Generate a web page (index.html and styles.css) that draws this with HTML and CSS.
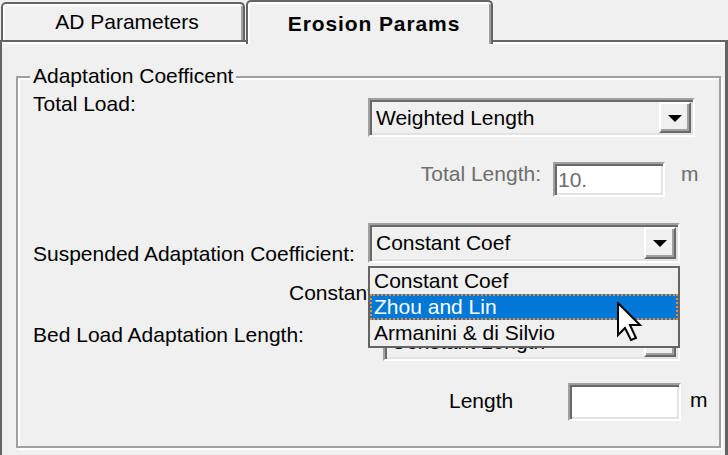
FILE: index.html
```html
<!DOCTYPE html>
<html>
<head>
<meta charset="utf-8">
<link rel="stylesheet" href="styles.css">
</head>
<body>
<div class="tabs">
  <div class="tab">AD Parameters</div>
  <div class="tab sel">Erosion Params</div>
</div>
<div class="page">
  <div class="group">
    <div class="legend">Adaptation Coefficent</div>
    <div class="row r1">
      <span class="lbl-a lbl-r1">Total Load:</span>
      <div class="combo cb1"><span class="val">Weighted Length</span><span class="btn"><i class="arrow"></i></span></div>
    </div>
    <div class="row r2">
      <span class="lbl-tl dis">Total Length:</span>
      <div class="field f1 dis">10.</div>
      <span class="unit u1 dis">m</span>
    </div>
    <div class="row r3">
      <span class="lbl-a lbl-r3">Suspended Adaptation Coefficient:</span>
      <div class="combo cb2"><span class="val">Constant Coef</span><span class="btn"><i class="arrow"></i></span>
        <div class="dd">
          <div class="item">Constant Coef</div>
          <div class="item hl">Zhou and Lin</div>
          <div class="item">Armanini &amp; di Silvio</div>
          <svg class="cursor" width="26" height="40" viewBox="0 0 26 40"><path d="M1 1 L1 33 L8 26 L14 38 L19 36 L13 23 L23 23 Z" fill="#fff" stroke="#000" stroke-width="2" stroke-linejoin="miter"/></svg>
        </div>
      </div>
    </div>
    <div class="row r4">
      <span class="lbl-cc">Constant Coefficient:</span>
    </div>
    <div class="row r5">
      <span class="lbl-b">Bed Load Adaptation Length:</span>
      <div class="combo cb3"><span class="val">Constant Length</span><span class="btn"><i class="arrow"></i></span></div>
    </div>
    <div class="row r6">
      <span class="lbl-len">Length</span>
      <div class="field f2"></div>
      <span class="unit u2">m</span>
    </div>
  </div>
</div>
</body>
</html>
```
FILE: styles.css
```css
* { box-sizing: border-box; }
html, body { margin: 0; padding: 0; }
body {
  width: 728px;
  height: 455px;
  overflow: hidden;
  background: #f0f0f0;
  font-family: "Liberation Sans", Arial, sans-serif;
  font-size: 21px;
  line-height: 24px;
  color: #000;
}
.tabs { display: flex; height: 40px; align-items: flex-start; }
.tab {
  margin-left: 1px;
  margin-top: 2px;
  width: 244px;
  height: 38px;
  border: 2px solid #646464;
  border-bottom: 0;
  border-radius: 5px 5px 0 0;
  box-shadow: inset 2px 2px 0 #fff, inset -2px 0 0 #a0a0a0;
  padding: 6px 0 0 8px;
  text-align: center;
  background: #f0f0f0;
  white-space: nowrap;
}
.tab.sel {
  margin-top: 0;
  width: 247px;
  height: 44px;
  position: relative;
  z-index: 1;
  font-weight: bold;
  letter-spacing: 0.9px;
  padding: 10px 0 0 9px;
}
.page {
  height: 420px;
  border: 2px solid #646464;
  border-right-width: 3px;
  border-bottom: 0;
  box-shadow: inset 0 2px 0 #fff;
  padding: 34px 0 0 14px;
}
.group {
  width: 705px;
  height: 372px;
  border: 2px solid #a0a0a0;
  box-shadow: inset 2px 2px 0 #fff, 2px 2px 0 #fff;
}
.legend {
  width: fit-content;
  margin: -14px 0 0 12px;
  padding: 0 3px;
  background: #f0f0f0;
  white-space: nowrap;
}
.row { display: flex; align-items: flex-start; padding-left: 15px; white-space: nowrap; }
.r1 { height: 49px; }
.r2 { height: 60px; }
.r3 { height: 66px; }
.r4 { height: 59px; }
.r5 { height: 39px; }
.r6 { height: 60px; }
.dis { color: #6d6d6d; }

.lbl-a { width: 335px; flex: none; }
.lbl-r1 { margin-top: 4px; }
.lbl-r3 { margin-top: 45px; }
.lbl-tl { width: 508px; flex: none; text-align: right; margin-top: 25px; }
.lbl-cc { margin-left: 256px; margin-top: 18px; width: 79px; overflow: hidden; flex: none; }
.lbl-b { width: 350px; flex: none; margin-top: 1px; }
.lbl-len { margin-left: 416px; width: 119px; flex: none; margin-top: 28px; }
.unit { flex: none; }
.u1 { margin-left: 16px; margin-top: 25px; }
.u2 { margin-left: 9px; margin-top: 27px; }

.combo {
  flex: none;
  display: flex;
  align-items: center;
  border: 2px solid;
  border-color: #a0a0a0 #fff #fff #a0a0a0;
  box-shadow: inset 2px 2px 0 #696969, inset -2px -2px 0 #e3e3e3;
  background: #f0f0f0;
  padding: 2px 2px 2px 6px;
}
.combo .val { flex: 1; overflow: hidden; }
.combo .btn {
  width: 32px;
  align-self: stretch;
  flex: none;
  display: flex;
  align-items: center;
  justify-content: center;
  border: 2px solid;
  border-color: #fff #696969 #696969 #fff;
  box-shadow: inset -2px -2px 0 #a0a0a0;
  background: #f0f0f0;
}
.arrow {
  display: block;
  width: 0;
  height: 0;
  border-left: 7px solid transparent;
  border-right: 7px solid transparent;
  border-top: 7px solid #000;
  margin: 1px 1px 0 0;
}
.cb1 { width: 327px; height: 39px; margin-top: 10px; }
.cb2 { width: 312px; height: 40px; margin-top: 26px; position: relative; z-index: 2; }
.cb3 { width: 297px; height: 39px; }

.field {
  flex: none;
  display: flex;
  align-items: center;
  border: 2px solid;
  border-color: #a0a0a0 #fff #fff #a0a0a0;
  box-shadow: inset 2px 2px 0 #696969, inset -2px -2px 0 #e3e3e3;
  background: #fff;
  padding: 0 0 0 3px;
}
.f1 { margin-left: 12px; width: 112px; height: 35px; margin-top: 25px; }
.f2 { width: 113px; height: 38px; margin-top: 22px; }

.dd {
  position: absolute;
  left: -2px;
  top: 41px;
  width: 312px;
  height: 82px;
  border: 2px solid #646464;
  background: #f0f0f0;
  color: #000;
}
.item { height: 26px; line-height: 26px; padding-left: 4px; white-space: nowrap; }
.item.hl {
  background: #0078d7;
  color: #fff;
  border: 2px dotted #f7882f;
  line-height: 22px;
  padding-left: 2px;
}
.cursor { position: absolute; left: 247px; top: 34px; }
```
